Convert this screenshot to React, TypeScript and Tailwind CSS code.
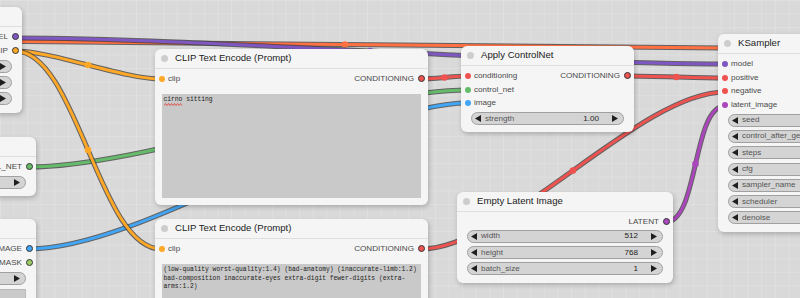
import React from 'react';

type Pair = [string, string];

const links = [
    { d: 'M29 167 C140.4 167 356.6 90 468 90', color: '#66bb6a' },
    { d: 'M29 249 C144.7 249 352.3 103 468 103', color: '#42a5f5' },
    { d: 'M-35 41 C155 41 535 48 725 48', color: '#ff7043', dot: [345, 44.5] },
    { d: 'M15 38 C192.6 38 547.4 64 725 64', color: '#7e57c2', dot: [370, 51] },
    { d: 'M15 51 C52 51 124 79 161 79', color: '#ffa726', dot: [88, 65] },
    { d: 'M15 51 C77 51 99 249 161 249', color: '#ffa726', dot: [88, 150] },
    { d: 'M421 79 C432.8 79 456.2 76 468 76', color: '#ef5350', dot: [444.5, 77.5] },
    { d: 'M628 76 C652.3 76 700.7 78 725 78', color: '#ef5350', dot: [676.5, 77] },
    { d: 'M421 249 C506.6 249 639.4 92 725 92', color: '#ef5350', dot: [573, 170.5] },
    { d: 'M666 222 C698.5 222 692.5 106 725 106', color: '#ab47bc', dot: [695.5, 164] },
];

function Dot({ color, out }: { color: string; out?: boolean }) {
    if (out) {
        return <span className={`h-[7px] w-[7px] shrink-0 rounded-full border border-[#333] ${color}`} />;
    }
    return <span className={`h-[6px] w-[6px] shrink-0 rounded-full ${color}`} />;
}

function SlotRow({ input, output }: { input?: Pair; output?: Pair }) {
    return (
        <div className="flex h-[13.8px] items-center justify-between text-[8.1px] text-[#4a4a4a]">
            {input ? (
                <div className="flex items-center pl-[3.5px]">
                    <Dot color={input[1]} />
                    <span className="ml-[3.5px]">{input[0]}</span>
                </div>
            ) : (
                <span />
            )}
            {output ? (
                <div className="flex items-center pr-[3.5px]">
                    <span className="mr-[3.5px] whitespace-nowrap">{output[0]}</span>
                    <Dot color={output[1]} out />
                </div>
            ) : null}
        </div>
    );
}

function Arrow({ left }: { left?: boolean }) {
    return (
        <svg width="6" height="7" viewBox="0 0 6 7" className="shrink-0">
            <path d={left ? 'M6 0 L0 3.5 L6 7 Z' : 'M0 0 L6 3.5 L0 7 Z'} fill="#1f1f1f" />
        </svg>
    );
}

function Widget({ label, value, className = 'mt-[3.3px]' }: { label: string; value?: string; className?: string }) {
    return (
        <div
            className={`mx-[10px] flex h-[13px] items-center rounded-full border border-[#a0a0a0] bg-[#d4d4d4] pl-[3px] pr-[5px] text-[8.1px] ${className}`}
        >
            <Arrow left />
            <span className="ml-[4px] whitespace-nowrap text-[#555]">{label}</span>
            <span className="ml-auto whitespace-nowrap text-[#222]">{value}</span>
            <span className="ml-[13px]">
                <Arrow />
            </span>
        </div>
    );
}

function Node({ className, title, children }: { className: string; title: string; children?: React.ReactNode }) {
    return (
        <div className={`absolute rounded-[6px] bg-[#f5f5f5] shadow-[1px_2px_5px_rgba(0,0,0,0.22)] ${className}`}>
            <div className="flex h-[20px] items-center border-b border-[#dedede]">
                <span className="ml-[6px] h-[7px] w-[7px] shrink-0 rounded-full bg-[#cdcdcd]" />
                <span className="ml-[7px] whitespace-nowrap text-[9.6px] text-[#222]">{title}</span>
            </div>
            <div className="pt-[3px]">{children}</div>
        </div>
    );
}

export default function App() {
    return (
        <div className="relative h-[298px] w-[800px] overflow-hidden bg-[#d9d9d9] bg-[linear-gradient(rgba(255,255,255,0.16)_1px,transparent_1px),linear-gradient(90deg,rgba(255,255,255,0.16)_1px,transparent_1px)] bg-[size:13.6px_13.6px] font-['Liberation_Sans',Arial,sans-serif]">
            <svg width="800" height="298" className="absolute left-0 top-0">
                {links.map((l, i) => (
                    <g key={i}>
                        <path d={l.d} fill="none" stroke="#3a3a3a" strokeOpacity="0.75" strokeWidth="5" />
                        <path d={l.d} fill="none" stroke={l.color} strokeWidth="3" />
                        {l.dot ? <circle cx={l.dot[0]} cy={l.dot[1]} r="3.3" fill={l.color} /> : null}
                    </g>
                ))}
            </svg>

            {/* checkpoint loader, mostly off screen */}
            <Node className="left-[-130px] top-[7px] h-[106px] w-[152px]" title="Load Checkpoint">
                <SlotRow output={['MODEL', 'bg-[#7e57c2]']} />
                <SlotRow output={['CLIP', 'bg-[#ffa726]']} />
                <Widget label="ckpt_name" className="mt-[2px]" />
                <Widget label="config" />
                <Widget label="vae" />
            </Node>

            <Node className="left-[-116px] top-[137px] h-[59px] w-[152px]" title="Load ControlNet">
                <SlotRow output={['CONTROL_NET', 'bg-[#66bb6a]']} />
                <Widget label="control_net_name" className="mt-[2px]" />
            </Node>

            <Node className="left-[-116px] top-[219px] h-[100px] w-[152px]" title="Load Image">
                <SlotRow output={['IMAGE', 'bg-[#42a5f5]']} />
                <SlotRow output={['MASK', 'bg-[#9ccc65]']} />
                <Widget label="image" className="mt-[2.5px]" />
                <div className="mx-[10px] mt-[4px] h-[20px] border border-[#b9b9b9] bg-[#cacaca]" />
            </Node>

            <Node className="left-[155px] top-[49px] h-[156px] w-[273px]" title="CLIP Text Encode (Prompt)">
                <SlotRow input={['clip', 'bg-[#ffa726]']} output={['CONDITIONING', 'bg-[#ef5350]']} />
                <div className="mx-[7px] mt-[8.5px] h-[104px] bg-[#c9c9c9] px-[1.5px] pt-[2px] font-['Liberation_Mono',monospace] text-[6.3px] leading-[8px] text-[#222]">
                    <span className="relative">
                        cirno
                        {/* spell-check squiggle */}
                        <svg width="19" height="3" viewBox="0 0 19 3" className="absolute left-0 top-[6.5px]">
                            <polyline
                                points="0,2.5 1.5,0.5 3,2.5 4.5,0.5 6,2.5 7.5,0.5 9,2.5 10.5,0.5 12,2.5 13.5,0.5 15,2.5 16.5,0.5 18,2.5"
                                fill="none"
                                stroke="#e53935"
                                strokeWidth="0.8"
                            />
                        </svg>
                    </span>{' '}
                    sitting
                </div>
            </Node>

            <Node className="left-[155px] top-[219px] h-[100px] w-[273px]" title="CLIP Text Encode (Prompt)">
                <SlotRow input={['clip', 'bg-[#ffa726]']} output={['CONDITIONING', 'bg-[#ef5350]']} />
                <div className="mx-[7px] mt-[8.5px] h-[60px] whitespace-pre bg-[#c9c9c9] px-[1.5px] pt-[2px] font-['Liberation_Mono',monospace] text-[6.3px] leading-[8.2px] text-[#222]">
                    (low-quality worst-quality:1.4) (bad-anatomy) (inaccurate-limb:1.2)
                    <br />
                    bad-composition inaccurate-eyes extra-digit fewer-digits (extra-
                    <br />
                    arms:1.2)
                </div>
            </Node>

            <Node className="left-[461px] top-[46px] h-[86px] w-[173px]" title="Apply ControlNet">
                <SlotRow input={['conditioning', 'bg-[#ef5350]']} output={['CONDITIONING', 'bg-[#ef5350]']} />
                <SlotRow input={['control_net', 'bg-[#66bb6a]']} />
                <SlotRow input={['image', 'bg-[#42a5f5]']} />
                <Widget label="strength" value="1.00" className="mt-[2px]" />
            </Node>

            <Node className="left-[457px] top-[192px] h-[91px] w-[216px]" title="Empty Latent Image">
                <SlotRow output={['LATENT', 'bg-[#ab47bc]']} />
                <Widget label="width" value="512" className="mt-[1px]" />
                <Widget label="height" value="768" />
                <Widget label="batch_size" value="1" />
            </Node>

            <Node className="left-[718px] top-[34px] h-[198px] w-[300px]" title="KSampler">
                <SlotRow input={['model', 'bg-[#7e57c2]']} />
                <SlotRow input={['positive', 'bg-[#ef5350]']} />
                <SlotRow input={['negative', 'bg-[#ef5350]']} />
                <SlotRow input={['latent_image', 'bg-[#ab47bc]']} />
                <Widget label="seed" className="mt-[1.5px]" />
                <Widget label="control_after_generate" />
                <Widget label="steps" />
                <Widget label="cfg" />
                <Widget label="sampler_name" />
                <Widget label="scheduler" />
                <Widget label="denoise" />
            </Node>
        </div>
    );
}
